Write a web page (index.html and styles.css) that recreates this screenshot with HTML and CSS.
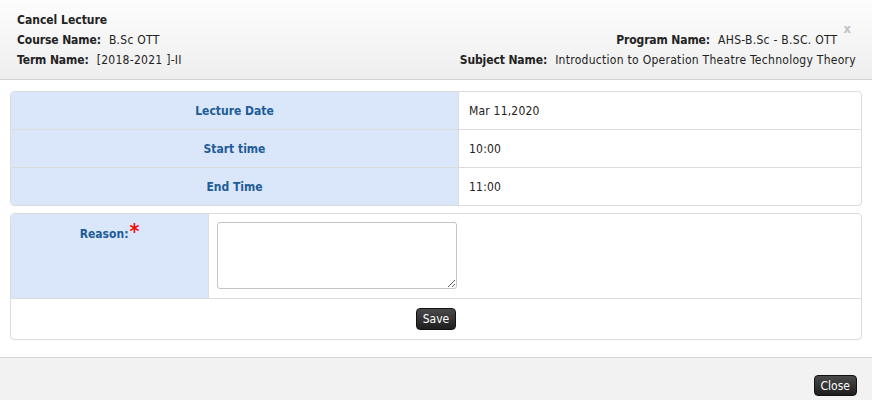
FILE: index.html
```html
<!DOCTYPE html>
<html>
<head>
<meta charset="utf-8">
<link rel="stylesheet" href="styles.css">
</head>
<body>
<div class="modal">
  <div class="header">
    <div class="hleft">
      <div class="title">Cancel Lecture</div>
      <div class="line"><b>Course Name:</b><span class="v">B.Sc OTT</span></div>
      <div class="line"><b>Term Name:</b><span class="v">[2018-2021 ]-II</span></div>
    </div>
    <div class="hright">
      <div class="line prog"><span><b>Program Name:</b><span class="v">AHS-B.Sc - B.SC. OTT</span></span><span class="closex">x</span></div>
      <div class="line"><b>Subject Name:</b><span class="v">Introduction to Operation Theatre Technology Theory</span></div>
    </div>
  </div>
  <div class="body">
    <div class="tbl info">
      <div class="row"><div class="lbl">Lecture Date</div><div class="val">Mar 11,2020</div></div>
      <div class="row"><div class="lbl">Start time</div><div class="val">10:00</div></div>
      <div class="row"><div class="lbl">End Time</div><div class="val">11:00</div></div>
    </div>
    <div class="tbl reason">
      <div class="row"><div class="lbl rl">Reason:<span class="req">*</span></div><div class="val rv"><textarea class="ta"></textarea></div></div>
      <div class="saverow"><button class="btn">Save</button></div>
    </div>
  </div>
  <div class="footer"><button class="btn close">Close</button></div>
</div>
</body>
</html>
```
FILE: styles.css
```css
html, body { margin: 0; padding: 0; }
body { font-family: "DejaVu Sans Condensed", "DejaVu Sans", sans-serif; font-size: 12px; color: #222; background: #fff; width: 872px; height: 400px; overflow: hidden; }
.modal { display: flex; flex-direction: column; height: 400px; }
.header { border-bottom: 1px solid #d4d4d4; background: linear-gradient(#fdfdfd, #eeeeee); display: flex; justify-content: space-between; padding: 10px 16px 0 17px; box-sizing: border-box; height: 80px; }
.title { font-weight: bold; line-height: 20px; }
.line { line-height: 20px; white-space: nowrap; }
.line b { letter-spacing: -0.1px; }
.v { margin-left: 8px; letter-spacing: 0.28px; }
.hright { display: flex; flex-direction: column; align-items: flex-end; padding-top: 20px; }
.prog { display: flex; align-items: flex-start; }
.closex { color: #c2c2c2; font-weight: bold; font-size: 13px; margin-left: 6px; margin-right: 5px; position: relative; top: -11px; letter-spacing: 0; }
.body { flex: 1; padding: 11px 10px 0 10px; display: flex; flex-direction: column; gap: 7px; }
.tbl { border: 1px solid #dcdcdc; border-radius: 4px; overflow: hidden; }
.row { display: flex; }
.info .row { height: 37px; }
.info .row + .row { border-top: 1px solid #dcdcdc; }
.lbl { background: #dae7fb; color: #1e5b97; font-weight: bold; display: flex; align-items: center; justify-content: center; border-right: 1px solid #dcdcdc; }
.info .lbl { width: 447px; }
.val { flex: 1; display: flex; align-items: center; padding-left: 10px; letter-spacing: 0.2px; }
.reason .row { height: 84px; border-bottom: 1px solid #dcdcdc; }
.rl { width: 198px; align-items: flex-start; padding-top: 13px; box-sizing: border-box; }
.req { color: #ee1111; font-size: 21px; line-height: 10px; position: relative; top: 0px; margin-left: 1px; font-weight: bold; }
.rv { align-items: flex-start; padding-left: 8px; padding-top: 8px; }
.ta { width: 240px; height: 67px; box-sizing: border-box; border: 1px solid #c4c4c4; border-radius: 3px; resize: both; margin: 0; }
.saverow { height: 40px; display: flex; align-items: center; justify-content: center; }
.btn { font-family: inherit; font-size: 12px; color: #fff; background: linear-gradient(#4a4a4a, #1e1e1e); border: 1px solid #111; border-radius: 4px; height: 22px; padding: 0 6px; line-height: 18px; }
.footer { height: 43px; border-top: 1px solid #d6d6d6; background: #f2f2f2; box-sizing: border-box; display: flex; justify-content: flex-end; align-items: flex-start; padding: 17px 15px 0 0; }
.close { height: 21px; }
```
